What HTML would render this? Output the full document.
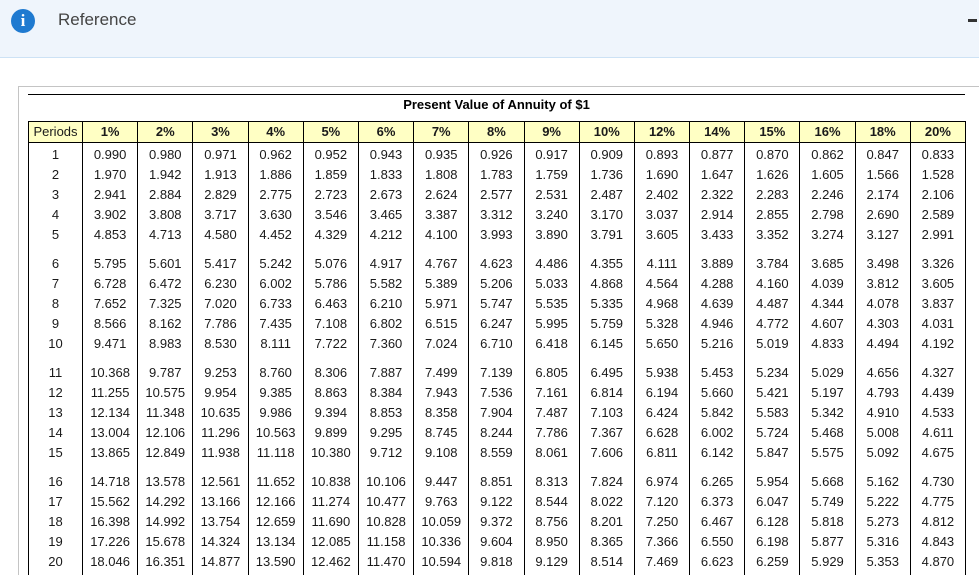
<!DOCTYPE html>
<html><head><style>
html,body{margin:0;width:979px;height:575px;overflow:hidden}
body{background:#fff;font-family:"Liberation Sans",Arial,sans-serif;position:relative}
.hdr{position:absolute;left:0;top:0;width:979px;height:57px;background:#eff5fc;border-bottom:1px solid #cde2f5}
.ic{position:absolute;left:11px;top:9px;width:24px;height:24px;border-radius:50%;background:#1f7ad0;color:#fff;font:bold 17px "Liberation Serif",serif;text-align:center;line-height:24px}
.ttl{position:absolute;left:58px;top:10px;font-size:17px;color:#444}
.dash{position:absolute;left:968px;top:19px;width:9px;height:3px;background:#333}
.box{position:absolute;left:18px;top:86px;width:960px;height:488px;border-left:1px solid #c4c4c4;border-top:1px solid #c4c4c4}
.bl{position:absolute;left:28px;top:94px;width:937px;height:1px;background:#000}
.pt{position:absolute;left:28px;top:97px;width:937px;text-align:center;font-weight:bold;font-size:13px}
table{position:absolute;left:28px;top:121px;border-collapse:collapse;table-layout:fixed;font-size:13px;color:#1a1a1a}
td{border-left:1px solid #000;border-right:1px solid #000;text-align:center;padding:0;height:20px;line-height:20px;white-space:nowrap}
tr.h td{background:#ffffc4;font-weight:bold;border:1px solid #000;height:20px}
tr.h td:first-child{font-weight:normal}
tr.f td{height:21px;padding-top:1px;line-height:20px}
tr.s td{height:9px;line-height:9px}
tr.e td{height:4px;line-height:4px}
</style></head><body>
<div class="hdr"><div class="ic">i</div><div class="ttl">Reference</div><div class="dash"></div></div>
<div class="box"></div><div class="bl"></div>
<div class="pt">Present Value of Annuity of $1</div>
<table>
<colgroup><col style="width:54px"><col span="16" style="width:55.2px"></colgroup>
<tr class="h"><td>Periods</td><td>1%</td><td>2%</td><td>3%</td><td>4%</td><td>5%</td><td>6%</td><td>7%</td><td>8%</td><td>9%</td><td>10%</td><td>12%</td><td>14%</td><td>15%</td><td>16%</td><td>18%</td><td>20%</td></tr>
<tr class="f"><td>1</td><td>0.990</td><td>0.980</td><td>0.971</td><td>0.962</td><td>0.952</td><td>0.943</td><td>0.935</td><td>0.926</td><td>0.917</td><td>0.909</td><td>0.893</td><td>0.877</td><td>0.870</td><td>0.862</td><td>0.847</td><td>0.833</td></tr>
<tr><td>2</td><td>1.970</td><td>1.942</td><td>1.913</td><td>1.886</td><td>1.859</td><td>1.833</td><td>1.808</td><td>1.783</td><td>1.759</td><td>1.736</td><td>1.690</td><td>1.647</td><td>1.626</td><td>1.605</td><td>1.566</td><td>1.528</td></tr>
<tr><td>3</td><td>2.941</td><td>2.884</td><td>2.829</td><td>2.775</td><td>2.723</td><td>2.673</td><td>2.624</td><td>2.577</td><td>2.531</td><td>2.487</td><td>2.402</td><td>2.322</td><td>2.283</td><td>2.246</td><td>2.174</td><td>2.106</td></tr>
<tr><td>4</td><td>3.902</td><td>3.808</td><td>3.717</td><td>3.630</td><td>3.546</td><td>3.465</td><td>3.387</td><td>3.312</td><td>3.240</td><td>3.170</td><td>3.037</td><td>2.914</td><td>2.855</td><td>2.798</td><td>2.690</td><td>2.589</td></tr>
<tr><td>5</td><td>4.853</td><td>4.713</td><td>4.580</td><td>4.452</td><td>4.329</td><td>4.212</td><td>4.100</td><td>3.993</td><td>3.890</td><td>3.791</td><td>3.605</td><td>3.433</td><td>3.352</td><td>3.274</td><td>3.127</td><td>2.991</td></tr>
<tr class="s"><td></td><td></td><td></td><td></td><td></td><td></td><td></td><td></td><td></td><td></td><td></td><td></td><td></td><td></td><td></td><td></td><td></td></tr>
<tr><td>6</td><td>5.795</td><td>5.601</td><td>5.417</td><td>5.242</td><td>5.076</td><td>4.917</td><td>4.767</td><td>4.623</td><td>4.486</td><td>4.355</td><td>4.111</td><td>3.889</td><td>3.784</td><td>3.685</td><td>3.498</td><td>3.326</td></tr>
<tr><td>7</td><td>6.728</td><td>6.472</td><td>6.230</td><td>6.002</td><td>5.786</td><td>5.582</td><td>5.389</td><td>5.206</td><td>5.033</td><td>4.868</td><td>4.564</td><td>4.288</td><td>4.160</td><td>4.039</td><td>3.812</td><td>3.605</td></tr>
<tr><td>8</td><td>7.652</td><td>7.325</td><td>7.020</td><td>6.733</td><td>6.463</td><td>6.210</td><td>5.971</td><td>5.747</td><td>5.535</td><td>5.335</td><td>4.968</td><td>4.639</td><td>4.487</td><td>4.344</td><td>4.078</td><td>3.837</td></tr>
<tr><td>9</td><td>8.566</td><td>8.162</td><td>7.786</td><td>7.435</td><td>7.108</td><td>6.802</td><td>6.515</td><td>6.247</td><td>5.995</td><td>5.759</td><td>5.328</td><td>4.946</td><td>4.772</td><td>4.607</td><td>4.303</td><td>4.031</td></tr>
<tr><td>10</td><td>9.471</td><td>8.983</td><td>8.530</td><td>8.111</td><td>7.722</td><td>7.360</td><td>7.024</td><td>6.710</td><td>6.418</td><td>6.145</td><td>5.650</td><td>5.216</td><td>5.019</td><td>4.833</td><td>4.494</td><td>4.192</td></tr>
<tr class="s"><td></td><td></td><td></td><td></td><td></td><td></td><td></td><td></td><td></td><td></td><td></td><td></td><td></td><td></td><td></td><td></td><td></td></tr>
<tr><td>11</td><td>10.368</td><td>9.787</td><td>9.253</td><td>8.760</td><td>8.306</td><td>7.887</td><td>7.499</td><td>7.139</td><td>6.805</td><td>6.495</td><td>5.938</td><td>5.453</td><td>5.234</td><td>5.029</td><td>4.656</td><td>4.327</td></tr>
<tr><td>12</td><td>11.255</td><td>10.575</td><td>9.954</td><td>9.385</td><td>8.863</td><td>8.384</td><td>7.943</td><td>7.536</td><td>7.161</td><td>6.814</td><td>6.194</td><td>5.660</td><td>5.421</td><td>5.197</td><td>4.793</td><td>4.439</td></tr>
<tr><td>13</td><td>12.134</td><td>11.348</td><td>10.635</td><td>9.986</td><td>9.394</td><td>8.853</td><td>8.358</td><td>7.904</td><td>7.487</td><td>7.103</td><td>6.424</td><td>5.842</td><td>5.583</td><td>5.342</td><td>4.910</td><td>4.533</td></tr>
<tr><td>14</td><td>13.004</td><td>12.106</td><td>11.296</td><td>10.563</td><td>9.899</td><td>9.295</td><td>8.745</td><td>8.244</td><td>7.786</td><td>7.367</td><td>6.628</td><td>6.002</td><td>5.724</td><td>5.468</td><td>5.008</td><td>4.611</td></tr>
<tr><td>15</td><td>13.865</td><td>12.849</td><td>11.938</td><td>11.118</td><td>10.380</td><td>9.712</td><td>9.108</td><td>8.559</td><td>8.061</td><td>7.606</td><td>6.811</td><td>6.142</td><td>5.847</td><td>5.575</td><td>5.092</td><td>4.675</td></tr>
<tr class="s"><td></td><td></td><td></td><td></td><td></td><td></td><td></td><td></td><td></td><td></td><td></td><td></td><td></td><td></td><td></td><td></td><td></td></tr>
<tr><td>16</td><td>14.718</td><td>13.578</td><td>12.561</td><td>11.652</td><td>10.838</td><td>10.106</td><td>9.447</td><td>8.851</td><td>8.313</td><td>7.824</td><td>6.974</td><td>6.265</td><td>5.954</td><td>5.668</td><td>5.162</td><td>4.730</td></tr>
<tr><td>17</td><td>15.562</td><td>14.292</td><td>13.166</td><td>12.166</td><td>11.274</td><td>10.477</td><td>9.763</td><td>9.122</td><td>8.544</td><td>8.022</td><td>7.120</td><td>6.373</td><td>6.047</td><td>5.749</td><td>5.222</td><td>4.775</td></tr>
<tr><td>18</td><td>16.398</td><td>14.992</td><td>13.754</td><td>12.659</td><td>11.690</td><td>10.828</td><td>10.059</td><td>9.372</td><td>8.756</td><td>8.201</td><td>7.250</td><td>6.467</td><td>6.128</td><td>5.818</td><td>5.273</td><td>4.812</td></tr>
<tr><td>19</td><td>17.226</td><td>15.678</td><td>14.324</td><td>13.134</td><td>12.085</td><td>11.158</td><td>10.336</td><td>9.604</td><td>8.950</td><td>8.365</td><td>7.366</td><td>6.550</td><td>6.198</td><td>5.877</td><td>5.316</td><td>4.843</td></tr>
<tr><td>20</td><td>18.046</td><td>16.351</td><td>14.877</td><td>13.590</td><td>12.462</td><td>11.470</td><td>10.594</td><td>9.818</td><td>9.129</td><td>8.514</td><td>7.469</td><td>6.623</td><td>6.259</td><td>5.929</td><td>5.353</td><td>4.870</td></tr>
<tr class="e"><td></td><td></td><td></td><td></td><td></td><td></td><td></td><td></td><td></td><td></td><td></td><td></td><td></td><td></td><td></td><td></td><td></td></tr>
</table>
</body></html>
